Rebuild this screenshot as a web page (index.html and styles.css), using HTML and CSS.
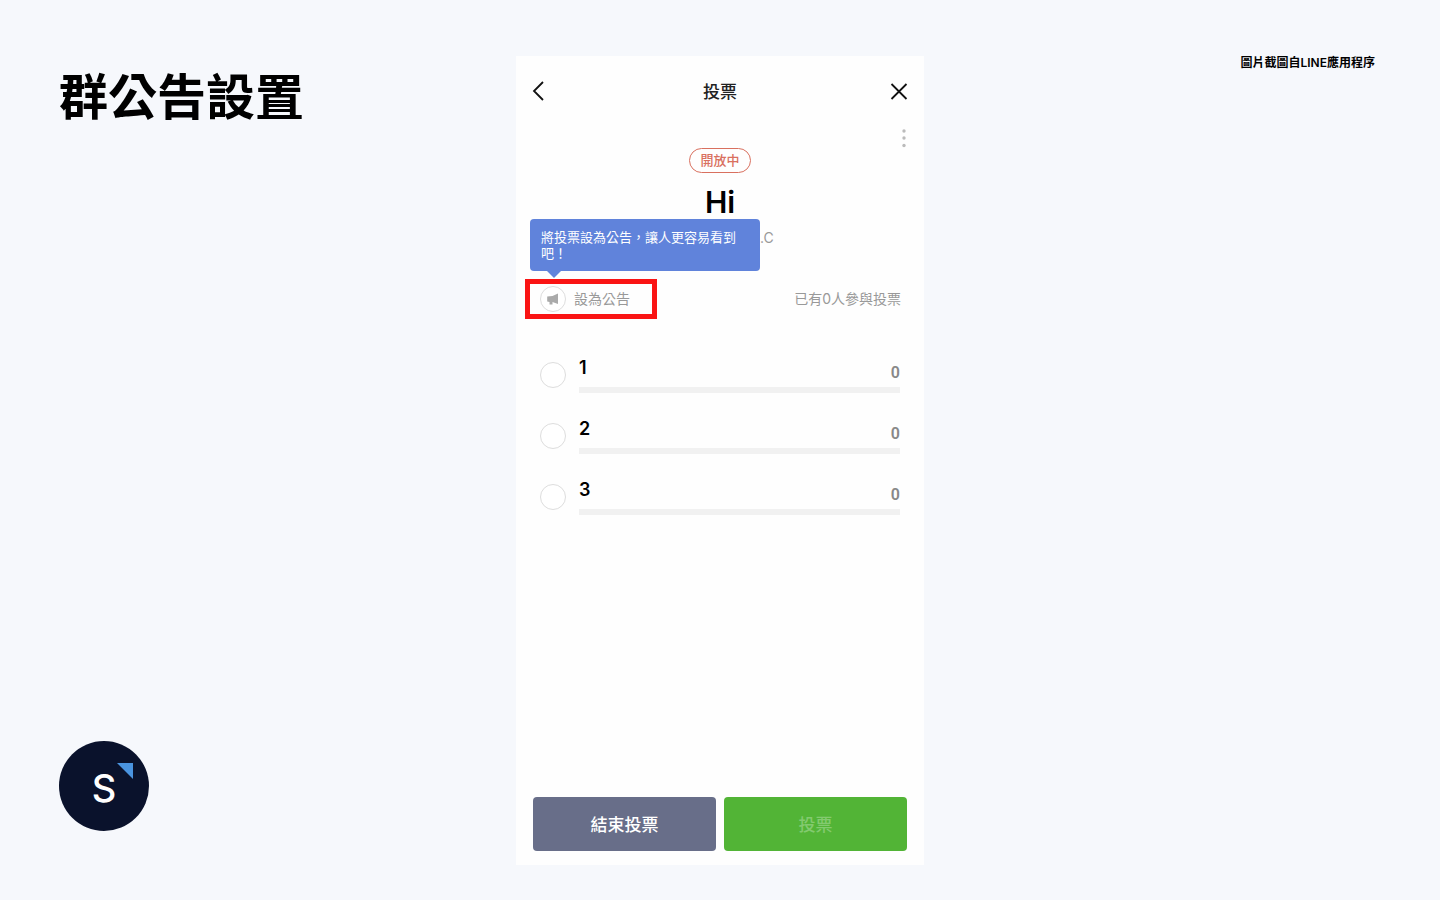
FILE: index.html
```
<!DOCTYPE html>
<html lang="zh-Hant">
<head>
    <meta charset="UTF-8">
    <meta name="viewport" content="width=device-width, initial-scale=1.0">
    <title>群公告設置</title>
    <link rel="stylesheet" href="styles.css">
</head>
<body>
    <div class="slide">
        <div class="side">
            <h1>群公告設置</h1>
            <svg class="logo" viewBox="0 0 90 90" role="img" aria-label="S">
                <circle cx="45" cy="45" r="45" fill="#0a122c"/>
                <path d="M58 22h16v16z" fill="#4a94e0"/>
                <text x="45" y="61" text-anchor="middle">S</text>
            </svg>
        </div>

        <main class="phone">
            <header class="topbar">
                <button type="button" class="icon-btn" aria-label="返回">
                    <svg width="18" height="20" viewBox="0 0 18 20"><path d="M11 1L2 10l9 9"/></svg>
                </button>
                <h2>投票</h2>
                <button type="button" class="icon-btn" aria-label="關閉">
                    <svg width="18" height="20" viewBox="0 0 18 20"><path d="M1.500 3l15 15M16.500 3l-15 15"/></svg>
                </button>
            </header>

            <button type="button" class="more" aria-label="更多">
                <svg width="6" height="22" viewBox="0 0 6 22">
                    <circle cx="3" cy="5" r="1.700"/>
                    <circle cx="3" cy="12" r="1.700"/>
                    <circle cx="3" cy="19.500" r="1.700"/>
                </svg>
            </button>

            <span class="badge">開放中</span>
            <h3>Hi</h3>
            <p class="author">.C</p>

            <div class="status">
                <div class="highlight">
                    <button type="button" class="announce">
                        <svg width="26" height="26" viewBox="0 0 26 26">
                            <circle cx="13" cy="13" r="12.5" fill="#fff" stroke="#ddd"/>
                            <path d="M18 7.500v10.500l-5.500-2v2.500H9.500V16L7.200 15.500v-5l5.300-.5z" fill="#aaa"/>
                        </svg>
                        <span>設為公告</span>
                    </button>
                    <div class="tooltip" role="tooltip">將投票設為公告，讓人更容易看到吧！</div>
                </div>
                <span class="count">已有0人參與投票</span>
            </div>

            <form class="poll" id="poll">
                <div class="option">
                    <input type="radio" name="vote" id="vote1">
                    <div class="option-body">
                        <label for="vote1">1</label>
                        <span class="votes">0</span>
                        <div class="bar"></div>
                    </div>
                </div>
                <div class="option">
                    <input type="radio" name="vote" id="vote2">
                    <div class="option-body">
                        <label for="vote2">2</label>
                        <span class="votes">0</span>
                        <div class="bar"></div>
                    </div>
                </div>
                <div class="option">
                    <input type="radio" name="vote" id="vote3">
                    <div class="option-body">
                        <label for="vote3">3</label>
                        <span class="votes">0</span>
                        <div class="bar"></div>
                    </div>
                </div>
            </form>

            <footer class="actions">
                <button type="button" class="end">結束投票</button>
                <button type="submit" class="submit" form="poll" disabled>投票</button>
            </footer>
        </main>

        <p class="credit">圖片截圖自LINE應用程序</p>
    </div>
</body>
</html>
```
FILE: styles.css
```
* {
    box-sizing: border-box;
}

body {
    margin: 0;
    background-color: #f6f8fc;
    color: #000;
    font-family: Inter, "Noto Sans CJK TC", sans-serif;
}

h1, h2, h3, p {
    margin: 0;
}

button {
    padding: 0;
    border: none;
    background: none;
    font: inherit;
    cursor: pointer;
}

svg {
    display: block;
}

.slide {
    display: grid;
    grid-template-columns: 1fr minmax(320px, 408px) 1fr;
    min-height: 100vh;
    padding: 56px 0 35px;
}

/* Título y logo */
.side {
    display: flex;
    flex-direction: column;
    justify-content: space-between;
    padding: 7px 0 34px 59px;
}

.side h1 {
    font-size: 49px;
    font-weight: 700;
    line-height: 70px;
}

.logo {
    width: 90px;
    height: 90px;
}

.logo text {
    fill: #fff;
    font-size: 38px;
    font-weight: 500;
}

.credit {
    padding-right: 65px;
    font-size: 12px;
    font-weight: 600;
    line-height: 14px;
    text-align: right;
}

/* Pantalla de la votación */
.phone {
    display: flex;
    flex-direction: column;
    background-color: #fefefe;
}

.topbar {
    display: flex;
    align-items: center;
    justify-content: space-between;
    height: 70px;
    padding: 0 16px;
}

.topbar h2 {
    padding-bottom: 2px;
    color: #222;
    font-size: 17px;
    font-weight: 500;
}

.icon-btn svg {
    fill: none;
    stroke: #111;
    stroke-width: 1.8;
}

.more {
    align-self: flex-end;
    margin-right: 17px;
}

.more svg {
    fill: #bbb;
}

.badge {
    align-self: center;
    padding: 0 10px;
    border: 1px solid #d9705f;
    border-radius: 13px;
    color: #d9705f;
    font-size: 13px;
    font-weight: 500;
    line-height: 23px;
}

.phone h3 {
    margin-top: 10px;
    font-size: 30px;
    font-weight: 600;
    line-height: 38px;
    text-align: center;
}

.author {
    margin-top: 7px;
    padding-left: 244px;
    color: #999;
    font-size: 14px;
    line-height: 20px;
}

.status {
    display: flex;
    align-items: center;
    justify-content: space-between;
    margin-top: 31px;
    padding: 0 23px 0 9px;
    color: #999;
    font-size: 14px;
}

.highlight {
    position: relative;
    width: 132px;
    padding: 2px 10px;
    border: 5px solid #fa1414;
}

.announce {
    display: flex;
    align-items: center;
    gap: 8px;
    color: #999;
}

.announce span,
.count {
    padding-bottom: 2px;
}

.tooltip {
    position: absolute;
    bottom: 43px;
    left: 0;
    width: 230px;
    padding: 10px 11px;
    border-radius: 4px;
    background-color: #6083db;
    color: #fff;
    font-size: 13px;
    line-height: 16px;
}

.tooltip::after {
    content: "";
    position: absolute;
    top: 100%;
    left: 17px;
    border: 7px solid transparent;
    border-top-color: #6083db;
    border-bottom: none;
}

.poll {
    display: flex;
    flex-direction: column;
    gap: 24px;
    padding: 37px 24px 24px;
}

.option {
    display: flex;
    align-items: center;
    gap: 13px;
}

.option input {
    appearance: none;
    width: 26px;
    height: 26px;
    margin: 0;
    border: 1px solid #ddd;
    border-radius: 50%;
    background-color: #fff;
}

.option input:checked {
    background-color: #52b436;
}

.option-body {
    display: flex;
    flex: 1;
    flex-wrap: wrap;
    justify-content: space-between;
}

.option label {
    font-size: 18px;
    font-weight: 600;
    line-height: 24px;
}

.votes {
    padding-top: 2px;
    color: #888;
    font-family: Roboto, sans-serif;
    font-size: 16px;
    font-weight: 600;
    line-height: 29px;
}

.bar {
    width: 100%;
    height: 6px;
    background-color: #f1f1f1;
}

.actions {
    display: grid;
    grid-template-columns: 1fr 1fr;
    gap: 8px;
    margin-top: auto;
    padding: 0 17px 14px;
}

.actions button {
    height: 54px;
    padding-bottom: 2px;
    border-radius: 4px;
    font-size: 17px;
    font-weight: 500;
}

.actions .end {
    background-color: #686e89;
    color: #fff;
}

.actions .submit {
    background-color: #52b436;
    color: #83ca6f;
}
```
